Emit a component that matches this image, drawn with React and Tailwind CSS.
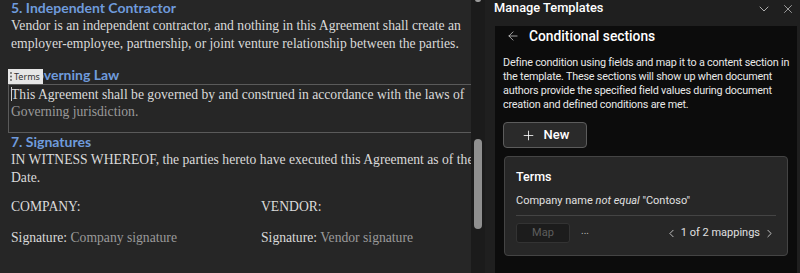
import React from "react";
import { ChevronDown, X, ArrowLeft, Plus, ChevronLeft, ChevronRight } from "lucide-react";

const serif = { fontFamily: '"Liberation Serif", serif' };

function Heading({ children, className = "" }) {
  return (
    <div
      className={"text-[14px] font-bold leading-[16px] text-[#6f9bdc] " + className}
      style={{ fontFamily: 'Lato, sans-serif' }}
    >
      {children}
    </div>
  );
}

export default function App() {
  return (
    <div className="flex w-[800px] h-[273px] overflow-hidden bg-[#1f1f1f]">
      {/* Document */}
      <div className="w-[471px] shrink-0 bg-[#262626] overflow-hidden text-[#dadada] text-[13.65px]" style={serif}>
        <div className="pl-[11px] pt-0">
          <Heading className="mt-0 leading-[15px]">5. Independent Contractor</Heading>
          <div className="leading-[18px] mt-[1px] whitespace-nowrap">
            <div>Vendor is an independent contractor, and nothing in this Agreement shall create an</div>
            <div>employer-employee, partnership, or joint venture relationship between the parties.</div>
          </div>
          <Heading className="mt-[14px]">6. Governing Law</Heading>
        </div>
        <div className="relative ml-[8px] mt-[1px] h-[49px] border-l border-t border-b border-[#5a5a5a]">
          <div className="absolute left-[-1px] top-[-16px] h-[15px] w-[35px] bg-[#e6e6e6] flex items-center text-[#333] text-[9px] leading-none" style={{ fontFamily: '"Noto Sans", sans-serif' }}>
            <svg width="4" height="11" viewBox="0 0 4 11" className="ml-[1px] mr-[1px]">
              <circle cx="2" cy="2" r="0.9" fill="#555" />
              <circle cx="2" cy="5.5" r="0.9" fill="#555" />
              <circle cx="2" cy="9" r="0.9" fill="#555" />
            </svg>
            <span>Terms</span>
          </div>
          <div className="pl-[2px] leading-[17px] pt-[1px] whitespace-nowrap relative">
            <span className="absolute left-[2px] top-[2px] w-px h-[14px] bg-[#cfcfcf]" />
            <div>This Agreement shall be governed by and construed in accordance with the laws of</div>
            <div className="text-[#9a9a9a]">Governing jurisdiction.</div>
          </div>
        </div>
        <div className="pl-[11px]">
          <Heading className="mt-[1px]">7. Signatures</Heading>
          <div className="leading-[18px] mt-[1px] whitespace-nowrap">
            <div>IN WITNESS WHEREOF, the parties hereto have executed this Agreement as of the Effective</div>
            <div>Date.</div>
          </div>
          <div className="flex mt-[11px] leading-[18px]">
            <div className="w-[250px]">COMPANY:</div>
            <div>VENDOR:</div>
          </div>
          <div className="flex mt-[13px] leading-[18px]">
            <div className="w-[250px]">Signature: <span className="text-[#9a9a9a]">Company signature</span></div>
            <div>Signature: <span className="text-[#9a9a9a]">Vendor signature</span></div>
          </div>
        </div>
      </div>

      {/* Scrollbar */}
      <div className="w-[14px] shrink-0 bg-[#1b1b1b] relative">
        <div className="absolute left-[4px] top-[-3px] w-[6px] h-[5px] bg-[#9a9a9a] rounded-sm" />
        <div className="absolute left-[3px] top-[139px] w-[8px] h-[90px] bg-[#8f8f8f] rounded-full" />
      </div>

      {/* Right panel */}
      <div className="flex-1 flex flex-col bg-[#1f1f1f] text-white" style={{ fontFamily: 'Roboto, sans-serif' }}>
        <div className="h-[26px] shrink-0 flex items-start pl-[9px] pr-[4px]">
          <div className="text-[12.8px] font-medium leading-[16px]">Manage Templates</div>
          <div className="ml-auto flex items-center gap-[9px] mt-[1px]">
            <ChevronDown size={16} strokeWidth={1.2} className="text-[#d0d0d0]" />
            <X size={14} strokeWidth={1.2} className="text-[#d0d0d0] mr-[1px]" />
          </div>
        </div>
        <div className="flex-1 flex">
          <div className="flex-1 bg-[#0c0c0c] ml-[10px] pl-[8px] pr-[6px]">
            <div className="flex items-center h-[18px] mt-[1px]">
              <ArrowLeft size={14} strokeWidth={1.3} className="ml-[3px] text-[#d0d0d0]" />
              <div className="ml-[9px] text-[13.8px] font-medium leading-[18px]">Conditional sections</div>
            </div>
            <div className="mt-[11px] text-[10.8px] tracking-[-0.2px] leading-[14px] text-[#e8e8e8]">
              Define condition using fields and map it to a content section in the template. These sections will show up when document authors provide the specified field values during document creation and defined conditions are met.
            </div>
            <div className="mt-[10px] w-[84px] h-[26px] rounded-[4px] border border-[#5c5c5c] bg-[#2a2a2a] flex items-center justify-center gap-[8px]">
              <Plus size={15} strokeWidth={1.3} className="text-white" />
              <span className="text-[13px] font-medium">New</span>
            </div>
            <div className="mt-[8px] ml-[1px] w-[284px] h-[100px] rounded-[4px] border border-[#444] bg-[#272727] px-[11px] pt-[12px]">
              <div className="text-[12.5px] font-medium leading-[16px]">Terms</div>
              <div className="mt-[8px] text-[11px] leading-[16px] text-[#e0e0e0]">
                Company name <i>not equal</i> "Contoso"
              </div>
              <div className="mt-[6px] border-t border-[#444]" />
              <div className="mt-[7px] flex items-center">
                <div className="w-[54px] h-[20px] rounded-[3px] border border-[#333] bg-[#1c1c1c] text-[#5e5e5e] text-[11px] flex items-center justify-center">Map</div>
                <div className="ml-[11px] text-[#bbb] text-[10px] -mt-[5px]">...</div>
                <div className="ml-auto flex items-center text-[11px] text-[#e0e0e0] gap-[3px]">
                  <ChevronLeft size={13} strokeWidth={1.5} />
                  <span>1 of 2 mappings</span>
                  <ChevronRight size={13} strokeWidth={1.5} />
                </div>
              </div>
            </div>
          </div>
          <div className="w-[3px]" />
        </div>
      </div>
    </div>
  );
}
